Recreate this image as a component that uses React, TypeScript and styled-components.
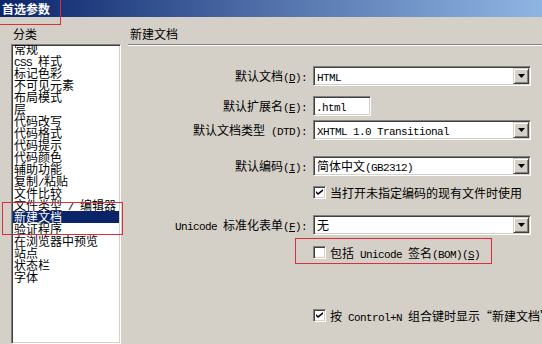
import React from 'react';
import styled, { createGlobalStyle } from 'styled-components';

const GlobalStyle = createGlobalStyle`
html, body {
  margin: 0;
  padding: 0;
  background: #d4d0c8;
  overflow: hidden;
}
body {
  font-family: "Noto Sans CJK SC", "Liberation Sans", sans-serif;
  font-size: 12px;
  color: #000;
}
`;

const Window = styled.div`
position: relative;
display: flex;
flex-direction: column;
width: 542px;
height: 344px;
overflow: hidden;
background: #d4d0c8;
`;

const TitleBar = styled.div`
flex: none;
height: 17px;
line-height: 17px;
padding-left: 2px;
background: linear-gradient(90deg, #0a246a 0%, #5271ab 50%, #8fb5e3 100%);
color: #fff;
font-weight: 700;
font-size: 12px;
`;

const Body = styled.div`
flex: 1;
display: flex;
min-height: 0;
`;

const Sidebar = styled.div`
flex: none;
width: 128px;
box-sizing: border-box;
padding: 11px 0 0 11px;
display: flex;
flex-direction: column;
`;

const Caption = styled.div`
height: 12px;
line-height: 12px;
margin: 0 0 4px 2px;
white-space: nowrap;
`;

const sunken = `
border: 1px solid;
border-color: #808080 #fff #fff #808080;
box-shadow: inset 1px 1px #404040, inset -1px -1px #d4d0c8;
`;

const ListBox = styled.div`
flex: 1;
width: 110px;
box-sizing: border-box;
background: #fff;
${sunken}
padding: 1px;
overflow: hidden;
`;

const ListInner = styled.div`
margin-top: -3px;
`;

const Item = styled.div<{ $selected?: boolean }>`
height: 12px;
line-height: 12px;
padding-left: 1px;
white-space: nowrap;
background: ${p => (p.$selected ? '#0a246a' : 'transparent')};
color: ${p => (p.$selected ? '#fff' : '#000')};
`;

const Panel = styled.div`
flex: 1;
min-width: 0;
padding-top: 11px;
display: flex;
flex-direction: column;
`;

const PanelTitle = styled.div`
height: 12px;
line-height: 12px;
margin: 0 0 4px 2px;
`;

const Separator = styled.div`
height: 0;
border-top: 1px solid #808080;
border-bottom: 1px solid #fff;
`;

const Row = styled.div<{ $top: number }>`
display: flex;
align-items: center;
height: 20px;
margin-top: ${p => p.$top}px;
`;

const Label = styled.div`
flex: none;
width: 185px;
box-sizing: border-box;
padding-right: 6px;
text-align: right;
white-space: nowrap;
line-height: 14px;
`;

// line-height 0 keeps the mono runs from growing the CJK line box
const Lt = styled.span`
font-family: "Liberation Mono", monospace;
font-size: 11px;
letter-spacing: -0.6px;
line-height: 0;
`;

const Combo = styled.div`
flex: none;
width: 218px;
height: 20px;
box-sizing: border-box;
background: #fff;
${sunken}
display: flex;
align-items: center;
padding: 1px;
`;

const Value = styled.div`
flex: 1;
padding-left: 2px;
line-height: 16px;
white-space: nowrap;
overflow: hidden;
`;

const DropButton = styled.div`
flex: none;
width: 16px;
height: 16px;
box-sizing: border-box;
background: #d4d0c8;
border: 1px solid;
border-color: #d4d0c8 #404040 #404040 #d4d0c8;
box-shadow: inset 1px 1px #fff, inset -1px -1px #808080;
display: flex;
align-items: center;
justify-content: center;
`;

const TextBox = styled.div`
flex: none;
width: 58px;
height: 20px;
box-sizing: border-box;
background: #fff;
${sunken}
padding: 1px 1px 1px 2px;
line-height: 16px;
`;

const CheckRow = styled.div<{ $top: number }>`
display: flex;
align-items: center;
gap: 4px;
height: 13px;
line-height: 13px;
margin: ${p => p.$top}px 0 0 185px;
white-space: nowrap;
`;

const Box = styled.div`
flex: none;
width: 13px;
height: 13px;
box-sizing: border-box;
background: #fff;
${sunken}
display: flex;
align-items: center;
justify-content: center;
`;

const Mark = styled.div<{ $x: number; $y: number; $w: number; $h: number }>`
position: absolute;
left: ${p => p.$x}px;
top: ${p => p.$y}px;
width: ${p => p.$w}px;
height: ${p => p.$h}px;
box-sizing: border-box;
border: 1px solid #d8303a;
pointer-events: none;
`;

// ascii runs get the narrow mono face, like SimSun's latin half
const mixed = (text: string) =>
  text.split(/([\x00-\x7f]+)/).filter(Boolean).map((part, i) =>
    /^[\x00-\x7f]+$/.test(part) ? <Lt key={i}>{part}</Lt> : <span key={i}>{part}</span>
  );

const categories = [
  '常规', 'CSS 样式', '标记色彩', '不可见元素', '布局模式', '层', '代码改写', '代码格式',
  '代码提示', '代码颜色', '辅助功能', '复制/粘贴', '文件比较', '文件类型 / 编辑器', '新建文档',
  '验证程序', '在浏览器中预览', '站点', '状态栏', '字体',
];

type FieldProps = { label: string; hotkey?: string; top: number; children: React.ReactNode };

const Field = ({ label, hotkey, top, children }: FieldProps) => (
  <Row $top={top}>
    <Label>
      {mixed(label)}
      {hotkey && <Lt>(<u>{hotkey}</u>): </Lt>}
    </Label>
    {children}
  </Row>
);

const Select = ({ value }: { value: string }) => (
  <Combo>
    <Value>{mixed(value)}</Value>
    <DropButton>
      <svg width="7" height="4" viewBox="0 0 7 4"><path d="M0 0h7L3.5 4z" fill="#000" /></svg>
    </DropButton>
  </Combo>
);

const Check = ({ checked, top, children }: { checked?: boolean; top: number; children: React.ReactNode }) => (
  <CheckRow $top={top}>
    <Box>
      {checked && (
        <svg width="7" height="7" viewBox="0 0 7 7"><path d="M0 2l2 2 5-4v2l-5 4-2-2z" fill="#000" /></svg>
      )}
    </Box>
    <span>{children}</span>
  </CheckRow>
);

export default function App() {
  return (
    <Window>
      <GlobalStyle />
      <TitleBar>首选参数</TitleBar>
      <Body>
        <Sidebar>
          <Caption>分类</Caption>
          <ListBox>
            <ListInner>
              {categories.map(c => (
                <Item key={c} $selected={c === '新建文档'}>{mixed(c)}</Item>
              ))}
            </ListInner>
          </ListBox>
        </Sidebar>
        <Panel>
          <PanelTitle>新建文档</PanelTitle>
          <Separator />
          <Field label="默认文档" hotkey="D" top={20}><Select value="HTML" /></Field>
          <Field label="默认扩展名" hotkey="E" top={10}><TextBox><Lt>.html</Lt></TextBox></Field>
          <Field label="默认文档类型 (DTD): " top={4}><Select value="XHTML 1.0 Transitional" /></Field>
          <Field label="默认编码" hotkey="I" top={16}><Select value="简体中文(GB2312)" /></Field>
          <Check checked top={10}>当打开未指定编码的现有文件时使用</Check>
          <Field label="Unicode 标准化表单" hotkey="F" top={16}><Select value="无" /></Field>
          <Check top={11}>包括<Lt> Unicode </Lt>签名<Lt>(BOM)(<u>S</u>)</Lt></Check>
          <Check checked top={50}>按<Lt> Control+N </Lt>组合键时显示“新建文档”对话框</Check>
        </Panel>
      </Body>
      <Mark $x={-2} $y={-2} $w={63} $h={27} />
      <Mark $x={2} $y={202} $w={121} $h={33} />
      <Mark $x={295} $y={238} $w={197} $h={26} />
    </Window>
  );
}
